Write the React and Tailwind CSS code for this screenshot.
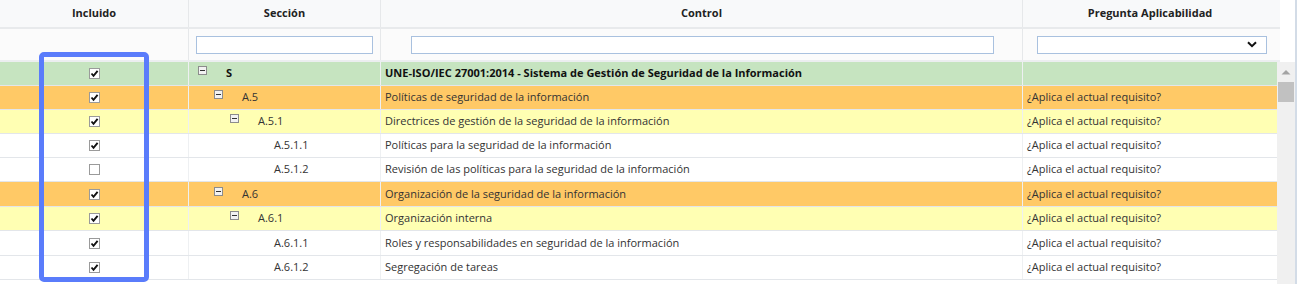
import React from 'react';

const rows = [
  { level: 0, code: 'S', control: 'UNE-ISO/IEC 27001:2014 - Sistema de Gestión de Seguridad de la Información', question: '', checked: true, tone: 'green', tall: false },
  { level: 1, code: 'A.5', control: 'Políticas de seguridad de la información', question: '¿Aplica el actual requisito?', checked: true, tone: 'orange', tall: false },
  { level: 2, code: 'A.5.1', control: 'Directrices de gestión de la seguridad de la información', question: '¿Aplica el actual requisito?', checked: true, tone: 'yellow', tall: false },
  { level: 3, code: 'A.5.1.1', control: 'Políticas para la seguridad de la información', question: '¿Aplica el actual requisito?', checked: true, tone: 'white', tall: false },
  { level: 3, code: 'A.5.1.2', control: 'Revisión de las políticas para la seguridad de la información', question: '¿Aplica el actual requisito?', checked: false, tone: 'white', tall: false },
  { level: 1, code: 'A.6', control: 'Organización de la seguridad de la información', question: '¿Aplica el actual requisito?', checked: true, tone: 'orange', tall: true },
  { level: 2, code: 'A.6.1', control: 'Organización interna', question: '¿Aplica el actual requisito?', checked: true, tone: 'yellow', tall: false },
  { level: 3, code: 'A.6.1.1', control: 'Roles y responsabilidades en seguridad de la información', question: '¿Aplica el actual requisito?', checked: true, tone: 'white', tall: true },
  { level: 3, code: 'A.6.1.2', control: 'Segregación de tareas', question: '¿Aplica el actual requisito?', checked: true, tone: 'white', tall: false },
];

const toneBg = {
  green: 'bg-[#c6e4c0]',
  orange: 'bg-[#ffc966]',
  yellow: 'bg-[#ffffb3]',
  white: 'bg-white',
};

const indent = ['pl-[9px]', 'pl-[25px]', 'pl-[41px]', 'pl-[57px]'];

const Checkbox = ({ checked }) => (
  <span className="w-[11px] h-[11px] border border-[#9a9a9a] bg-white flex items-center justify-center">
    {checked && (
      <svg width="9" height="9" viewBox="0 0 9 9">
        <path d="M1.5 4.5 L3.5 6.8 L7.6 1.8" fill="none" stroke="#111" strokeWidth="1.9" />
      </svg>
    )}
  </span>
);

const Collapse = () => (
  <span className="w-[9px] h-[9px] border border-[#8c8c8c] bg-[#f2f2f2] flex items-center justify-center mt-[-6px]">
    <span className="w-[5px] h-px bg-[#333]" />
  </span>
);

const Row = ({ row }) => {
  const bold = row.level === 0;
  return (
    <div className={`grid grid-cols-[189px_192px_642px_254px] border-b border-[#e3e6ea] ${row.tall ? 'h-[25px]' : 'h-6'} ${toneBg[row.tone]}`}>
      <div className="flex items-center justify-center border-r border-[#eef0f2]">
        <Checkbox checked={row.checked} />
      </div>
      <div className={`flex items-center border-r border-[#eef0f2] ${indent[row.level]}`}>
        {row.level < 3 ? <Collapse /> : <span className="w-[9px]" />}
        <span className={`ml-[19px] ${bold ? 'font-bold text-[#111]' : ''}`}>{row.code}</span>
      </div>
      <div className={`flex items-center pl-1 border-r border-[#eef0f2] whitespace-nowrap ${bold ? 'font-bold text-[#111]' : ''}`}>
        {row.control}
      </div>
      <div className="flex items-center pl-1 whitespace-nowrap">{row.question}</div>
    </div>
  );
};

export default function App() {
  return (
    <div className="relative w-[1301px] h-[284px] bg-white overflow-hidden text-[11px] text-[#333]" style={{ fontFamily: '"Open Sans", "Liberation Sans", sans-serif' }}>
      <div className="w-[1297px] h-full border-r-2 border-[#d3dce7] flex flex-col">
        {/* header */}
        <div className="grid grid-cols-[189px_192px_642px_254px] h-[29px] bg-[#f8f9fa] border-b-2 border-[#e8eaec] w-[1280px]">
          {['Incluido', 'Sección', 'Control', 'Pregunta Aplicabilidad'].map((h, i) => (
            <div key={h} className={`flex items-center justify-center font-bold text-[#222] ${i < 3 ? 'border-r border-[#e6e8ea]' : ''}`}>
              {h}
            </div>
          ))}
        </div>
        {/* filters */}
        <div className="grid grid-cols-[189px_192px_642px_254px] h-[33px] bg-[#fbfbfb] border-b-2 border-[#eceef0] w-[1280px]">
          <div className="border-r border-[#e6e8ea]" />
          <div className="flex items-center justify-center border-r border-[#e6e8ea]">
            <div className="w-[177px] h-[18px] border border-[#a9c1df] bg-white" />
          </div>
          <div className="flex items-center pl-[30px] border-r border-[#e6e8ea]">
            <div className="w-[583px] h-[18px] border border-[#a9c1df] bg-white" />
          </div>
          <div className="flex items-center pl-[14px]">
            <div className="w-[230px] h-[18px] border border-[#a9c1df] bg-white flex items-center justify-end pr-[9px]">
              <svg width="10" height="7" viewBox="0 0 10 7">
                <path d="M1 1.2 L5 5.2 L9 1.2" fill="none" stroke="#111" strokeWidth="2" />
              </svg>
            </div>
          </div>
        </div>
        {/* body */}
        <div className="flex flex-1">
          <div className="w-[1277px]">
            {rows.map((r) => (
              <Row key={r.code} row={r} />
            ))}
          </div>
          <div className="w-[18px] bg-[#f0f0f0] flex flex-col items-center">
            <svg width="10" height="6" viewBox="0 0 10 6" className="mt-[7px]">
              <path d="M0.5 5.5 L5 1 L9.5 5.5 Z" fill="#a3a3a3" />
            </svg>
            <div className="w-[16px] h-[20px] bg-[#c1c1c1] mt-[7px]" />
          </div>
        </div>
      </div>
      <div className="absolute left-[39px] top-[52px] w-[110px] h-[230px] border-[5px] border-[#5a7cfb] rounded-[5px]" />
    </div>
  );
}
